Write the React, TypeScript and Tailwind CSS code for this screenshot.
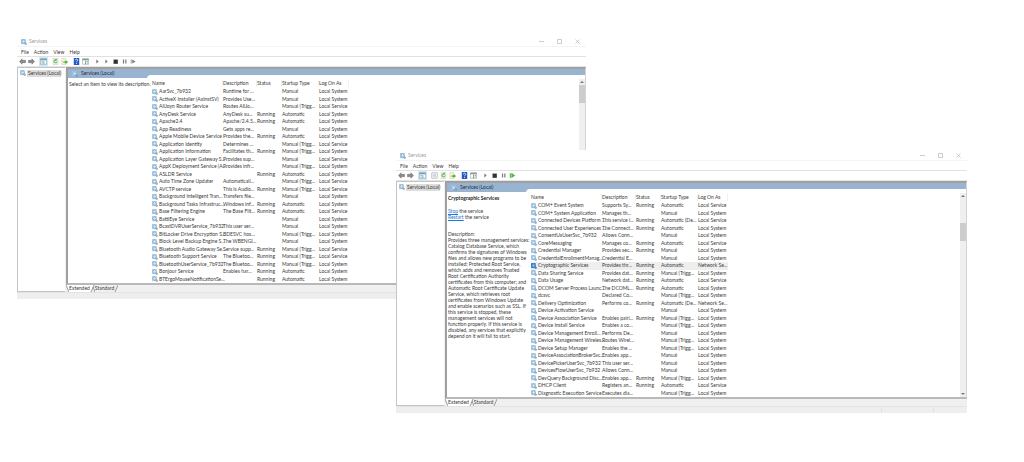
import React from 'react';

type Row = [name: string, description: string, status: string, startup: string, logOn: string];

const SYS = 'Local System';
const LOC = 'Local Service';
const NET = 'Network Se...';

const firstRows: Row[] = [
  ['AarSvc_7b932', 'Runtime for ...', '', 'Manual', SYS],
  ['ActiveX Installer (AxInstSV)', 'Provides Use...', '', 'Manual', SYS],
  ['AllJoyn Router Service', 'Routes AllJo...', '', 'Manual (Trigg...', LOC],
  ['AnyDesk Service', 'AnyDesk su...', 'Running', 'Automatic', SYS],
  ['Apache2.4', 'Apache/2.4.5...', 'Running', 'Automatic', SYS],
  ['App Readiness', 'Gets apps re...', '', 'Manual', SYS],
  ['Apple Mobile Device Service', 'Provides the...', 'Running', 'Automatic', SYS],
  ['Application Identity', 'Determines ...', '', 'Manual (Trigg...', LOC],
  ['Application Information', 'Facilitates th...', 'Running', 'Manual (Trigg...', SYS],
  ['Application Layer Gateway S...', 'Provides sup...', '', 'Manual', LOC],
  ['AppX Deployment Service (A...', 'Provides infr...', '', 'Manual (Trigg...', SYS],
  ['ASLDR Service', '', 'Running', 'Automatic', SYS],
  ['Auto Time Zone Updater', 'Automaticall...', '', 'Manual (Trigg...', LOC],
  ['AVCTP service', 'This is Audio...', 'Running', 'Manual (Trigg...', LOC],
  ['Background Intelligent Tran...', 'Transfers file...', '', 'Manual', SYS],
  ['Background Tasks Infrastruc...', 'Windows inf...', 'Running', 'Automatic', SYS],
  ['Base Filtering Engine', 'The Base Filt...', 'Running', 'Automatic', LOC],
  ['BattlEye Service', '', '', 'Manual', SYS],
  ['BcastDVRUserService_7b932', 'This user ser...', '', 'Manual', SYS],
  ['BitLocker Drive Encryption S...', 'BDESVC hos...', '', 'Manual (Trigg...', SYS],
  ['Block Level Backup Engine S...', 'The WBENGI...', '', 'Manual', SYS],
  ['Bluetooth Audio Gateway Se...', 'Service supp...', 'Running', 'Manual (Trigg...', LOC],
  ['Bluetooth Support Service', 'The Bluetoo...', 'Running', 'Manual (Trigg...', LOC],
  ['BluetoothUserService_7b932', 'The Bluetoo...', 'Running', 'Manual (Trigg...', SYS],
  ['Bonjour Service', 'Enables har...', 'Running', 'Automatic', SYS],
  ['BTErgoMouseNotificationSe...', '', 'Running', 'Automatic', SYS],
];

const secondRows: Row[] = [
  ['COM+ Event System', 'Supports Sy...', 'Running', 'Automatic', LOC],
  ['COM+ System Application', 'Manages th...', '', 'Manual', SYS],
  ['Connected Devices Platform ...', 'This service i...', 'Running', 'Automatic (De...', LOC],
  ['Connected User Experiences ...', 'The Connect...', 'Running', 'Automatic', SYS],
  ['ConsentUxUserSvc_7b932', 'Allows Conn...', '', 'Manual', SYS],
  ['CoreMessaging', 'Manages co...', 'Running', 'Automatic', LOC],
  ['Credential Manager', 'Provides sec...', 'Running', 'Manual', SYS],
  ['CredentialEnrollmentManag...', 'Credential E...', '', 'Manual', SYS],
  ['Cryptographic Services', 'Provides thr...', 'Running', 'Automatic', NET],
  ['Data Sharing Service', 'Provides dat...', 'Running', 'Manual (Trigg...', SYS],
  ['Data Usage', 'Network dat...', 'Running', 'Automatic', LOC],
  ['DCOM Server Process Launc...', 'The DCOML...', 'Running', 'Automatic', SYS],
  ['dcsvc', 'Declared Co...', '', 'Manual (Trigg...', SYS],
  ['Delivery Optimization', 'Performs co...', 'Running', 'Automatic (De...', NET],
  ['Device Activation Service', '', '', 'Manual', SYS],
  ['Device Association Service', 'Enables pairi...', 'Running', 'Manual (Trigg...', SYS],
  ['Device Install Service', 'Enables a co...', '', 'Manual (Trigg...', SYS],
  ['Device Management Enroll...', 'Performs De...', '', 'Manual', SYS],
  ['Device Management Wireles...', 'Routes Wirel...', '', 'Manual (Trigg...', SYS],
  ['Device Setup Manager', 'Enables the ...', '', 'Manual (Trigg...', SYS],
  ['DeviceAssociationBrokerSvc...', 'Enables app...', '', 'Manual', SYS],
  ['DevicePickerUserSvc_7b932', 'This user ser...', '', 'Manual', SYS],
  ['DevicesFlowUserSvc_7b932', 'Allows Conn...', '', 'Manual', SYS],
  ['DevQuery Background Disc...', 'Enables app...', 'Running', 'Manual (Trigg...', SYS],
  ['DHCP Client', 'Registers an...', 'Running', 'Automatic', LOC],
  ['Diagnostic Execution Service', 'Executes dia...', '', 'Manual (Trigg...', SYS],
];

const cryptoDescription = [
  'Description:',
  'Provides three management services:',
  'Catalog Database Service, which',
  'confirms the signatures of Windows',
  'files and allows new programs to be',
  'installed; Protected Root Service,',
  'which adds and removes Trusted',
  'Root Certification Authority',
  'certificates from this computer; and',
  'Automatic Root Certificate Update',
  'Service, which retrieves root',
  'certificates from Windows Update',
  'and enable scenarios such as SSL. If',
  'this service is stopped, these',
  'management services will not',
  'function properly. If this service is',
  'disabled, any services that explicitly',
  'depend on it will fail to start.',
];

const GearIcon: React.FC<{ active?: boolean; light?: boolean }> = ({ active, light }) => (
  <svg viewBox="0 0 14 14" className="h-[6px] w-[6px] shrink-0" aria-hidden="true">
    <rect x="0" y="0" width="11" height="12" fill={active ? '#3f8fdc' : light ? '#a9c8e2' : '#b4d0e6'} />
    <circle cx="6" cy="6" r="4" fill={active ? '#8cc0f0' : '#d6e8f5'} stroke={active ? '#1b66b8' : '#6f9fc4'} strokeWidth="1.6" />
    <circle cx="11" cy="11" r="2" fill="none" stroke={active ? '#1b66b8' : '#648cad'} strokeWidth="1.6" />
  </svg>
);

const icons: Record<string, React.ReactNode> = {
  Back: <path d="M1 9 8 2v4h9v6H8v4Z" fill="#8b8b8b" stroke="#5e5e5e" />,
  Forward: <path d="M17 9 10 2v4H1v6h9v4Z" fill="#8b8b8b" stroke="#5e5e5e" />,
  'Console tree': (
    <>
      <path d="M1 2h16v14H1z" fill="#fff" stroke="#7c97ad" strokeWidth="1.5" />
      <path d="M1 2h16v4H1z" fill="#7c97ad" />
      <path d="M4 9h3M4 13h3M10 8v7" stroke="#4d9a6a" strokeWidth="2" />
    </>
  ),
  Properties: (
    <>
      <path d="M2 2h14v14H2z" fill="#fff" stroke="#9a9a9a" strokeWidth="1.5" />
      <path d="M5 6h8M5 9h8M5 12h8" stroke="#9db8cf" strokeWidth="1.5" />
    </>
  ),
  Refresh: (
    <>
      <path d="M3 1h12v16H3z" fill="#eef6e8" stroke="#a9b8a0" />
      <path d="M13 9a4 4 0 1 1-2-4M11 2v4h-4" fill="none" stroke="#42ad35" strokeWidth="2.2" />
    </>
  ),
  Export: (
    <>
      <path d="M2 1h10v16H2z" fill="#fbf3d2" stroke="#b9b39a" />
      <path d="M6 9h6V5l6 5.500-6 5.500v-4H6z" fill="#42b135" />
    </>
  ),
  'Action pane': (
    <>
      <path d="M1 2h16v14H1z" fill="#fff" stroke="#8b98a3" strokeWidth="1.5" />
      <path d="M1 2h16v4H1z" fill="#8b98a3" />
      <path d="M12 9h3M12 13h3M9 7v9" stroke="#4d9a6a" strokeWidth="2" />
    </>
  ),
  Help: (
    <>
      <path d="M2 0h14v18H2z" fill="#2458c4" />
      <path d="M6 6c0-4 6-4 6 0 0 2-3 2-3 5M9 13v2.500" fill="none" stroke="#fff" strokeWidth="2" />
    </>
  ),
  Start: <path d="M6 4v10l6-5Z" fill="#777" />,
  Resume: <path d="M6 4v10l6-5Z" fill="#777" />,
  Stop: <path d="M4 4h11v11H4z" fill="#333" />,
  Pause: <path d="M5 4h3v10H5zM11 4h3v10h-3z" fill="#777" />,
  Restart: <path d="M2 4h2v10H2zM6 4v10l8-5Z" fill="#777" />,
  'Restart service': <path d="M2 3h3v12H2zM6 2v14l10-7Z" fill="#4cba3c" />,
};

const Tool: React.FC<{ name: string }> = ({ name }) => (
  <button
    aria-label={name}
    className={`flex h-[9px] w-[9px] items-center justify-center ${name === 'Console tree' ? 'bg-[#cce8ff]' : ''}`}
  >
    <svg viewBox="0 0 18 18" className="h-[7px] w-[7px]">{icons[name]}</svg>
  </button>
);

const ServiceTable: React.FC<{ rows: Row[]; selected?: string }> = ({ rows, selected }) => (
  <table className="block whitespace-nowrap pl-[5px] pt-[3px] leading-[7px]">
    <thead className="block">
      <tr className="grid h-[10px] grid-cols-[71px_34px_25px_37px_30px] items-center text-left">
        {['Name', 'Description', 'Status', 'Startup Type', 'Log On As'].map((h) => (
          <th key={h} className="border-r border-[#f0f0f0] font-normal">{h}</th>
        ))}
      </tr>
    </thead>
    <tbody className="grid h-[195px] auto-rows-fr">
      {rows.map((row) => (
        <tr
          key={row[0]}
          className={`grid grid-cols-[71px_34px_25px_37px_30px] items-center ${row[0] === selected ? 'bg-[#eeeeee]' : ''}`}
        >
          <td className="flex items-center gap-px">
            <GearIcon active={row[0] === selected} />
            {row[0]}
          </td>
          <td>{row[1]}</td>
          <td>{row[2]}</td>
          <td>{row[3]}</td>
          <td>{row[4]}</td>
        </tr>
      ))}
    </tbody>
  </table>
);

type WindowProps = {
  className: string;
  tools: string[][];
  rows: Row[];
  selected?: string;
  thumb: string;
  children: React.ReactNode;
};

const ServicesWindow: React.FC<WindowProps> = ({ className, tools, rows, selected, thumb, children }) => (
  <section className={`absolute isolate flex flex-col bg-white ${className}`}>
    <header className="flex h-[11px] items-center border-b border-[#f4f4f4] pl-[4px] pt-px text-[#9a9a9a]">
      <GearIcon light />
      <h1 className="ml-[2px] flex-1">Services</h1>
      <button aria-label="Minimize" className="flex w-[18px] items-center justify-center">
        <svg viewBox="0 0 10 10" className="h-[5px] w-[5px]"><path d="M0 5h10" stroke="#bbb" strokeWidth="1.5" /></svg>
      </button>
      <button aria-label="Maximize" className="flex w-[18px] items-center justify-center">
        <svg viewBox="0 0 10 10" className="h-[5px] w-[5px]"><path d="M1 1h8v8H1z" fill="none" stroke="#bbb" strokeWidth="1.5" /></svg>
      </button>
      <button aria-label="Close" className="flex w-[18px] items-center justify-center">
        <svg viewBox="0 0 10 10" className="h-[5px] w-[5px]"><path d="M1 1l8 8M9 1 1 9" stroke="#bbb" strokeWidth="1.5" /></svg>
      </button>
    </header>

    <nav className="flex h-[10px] items-center gap-[5px] border-b border-[#e2e2e2] pl-[4px] pt-px">
      <button>File</button>
      <button>Action</button>
      <button>View</button>
      <button>Help</button>
    </nav>

    <div className="flex h-[9px] items-center gap-[3px] pl-px">
      {tools.map((group) => (
        <div key={group[0]} className="flex">
          {group.map((name) => <Tool key={name} name={name} />)}
        </div>
      ))}
    </div>

    <div className="flex border-t border-[#e4e4e4] bg-[#f0f0f0]">
      <aside className="w-[48px] shrink-0 border-b border-l border-t border-[#c4c4c4] bg-white pl-px pt-px">
        <div className="flex h-[8px] items-center gap-px whitespace-nowrap pl-px">
          <GearIcon />
          <span className="bg-[#dcdcdc] pl-px">Services (Local)</span>
        </div>
      </aside>

      <main className="ml-px min-w-0 flex-1">
        <div className="flex border-b-2 border-l-2 border-r border-t-2 border-b-[#b9b9b9] border-l-[#a0a0a0] border-r-[#d4d4d4] border-t-[#a0a0a0] bg-[#99b4d1]">
          <div className="z-10 flex w-[79px] shrink-0 flex-col">
            <h2 className="flex h-[9px] items-center gap-[3px] pl-[4px] text-[#1c2a3a]">
              <GearIcon light />
              Services (Local)
            </h2>
            <div className="flex-1 whitespace-nowrap bg-white pl-px pt-[3px] leading-[6px]">{children}</div>
          </div>
          <div className="mt-[6px] flex min-w-0 flex-1 justify-between rounded-tl-[4px] bg-white">
            <ServiceTable rows={rows} selected={selected} />
            <div className="mt-[4px] flex w-[6px] flex-col items-center bg-[#efefef] text-[#777]">
              <svg viewBox="0 0 6 6" className="h-[6px] w-[6px]"><path d="M1 4 3 2l2 2Z" fill="currentColor" /></svg>
              <div className={`h-[18px] w-full bg-[#cdcdcd] ${thumb}`} />
              <svg viewBox="0 0 6 6" className="mt-auto h-[6px] w-[6px]"><path d="M1 2l2 2 2-2Z" fill="currentColor" /></svg>
            </div>
          </div>
        </div>
        <div className="flex h-[7px] items-center">
          <svg viewBox="0 0 3 7" className="h-[7px] w-[3px]"><path d="M0 0l3 7V0Z" fill="#fff" /><path d="M0 0l3 7" stroke="#777" strokeWidth=".7" /></svg>
          <button className="h-[7px] bg-white leading-[7px]">Extended</button>
          <svg viewBox="0 0 5 7" className="h-[7px] w-[5px]"><path d="M0 0h4L1 7H0Z" fill="#fff" /><path d="M4 0 1 7M3 2l2 5" fill="none" stroke="#777" strokeWidth=".7" /></svg>
          <button className="h-[7px] leading-[7px]">Standard</button>
          <svg viewBox="0 0 4 7" className="h-[7px] w-[4px]"><path d="M4 0 1 7" stroke="#777" strokeWidth=".7" /></svg>
        </div>
      </main>
    </div>

    <footer className="flex h-[7px] justify-end border-t border-[#e4e4e4] bg-[#eeeeee]">
      <span className="w-[52px] border-l border-[#e2e2e2]" />
      <span className="w-[34px] border-l border-[#e2e2e2]" />
    </footer>
  </section>
);

export default function App() {
  return (
    <div className="relative min-h-screen overflow-hidden bg-white font-['Lato','Open_Sans',sans-serif] text-[5px] leading-[7px] text-[#3a3a3a]">
      <ServicesWindow
        className="left-[17px] right-[438px] top-[36px]"
        tools={[
          ['Back', 'Forward'],
          ['Console tree'],
          ['Refresh', 'Export'],
          ['Help', 'Action pane'],
          ['Start', 'Resume', 'Stop', 'Pause', 'Restart'],
        ]}
        rows={firstRows}
        thumb=""
      >
        <p>Select an item to view its description.</p>
      </ServicesWindow>

      <ServicesWindow
        className="left-[396px] right-[57px] top-[150px]"
        tools={[
          ['Back', 'Forward'],
          ['Console tree'],
          ['Properties', 'Refresh', 'Export'],
          ['Help', 'Action pane'],
          ['Start', 'Stop', 'Pause', 'Restart service'],
        ]}
        rows={secondRows}
        selected="Cryptographic Services"
        thumb="mt-[24px]"
      >
        <h3 className="font-bold text-[#222]">Cryptographic Services</h3>
        <p className="mt-[7px]"><a href="#stop" className="text-[#1a78d6] underline">Stop</a> the service</p>
        <p><a href="#restart" className="text-[#1a78d6] underline">Restart</a> the service</p>
        <p className="mt-[11px]">
          {cryptoDescription.map((line) => <span key={line} className="block">{line}</span>)}
        </p>
      </ServicesWindow>
    </div>
  );
}
